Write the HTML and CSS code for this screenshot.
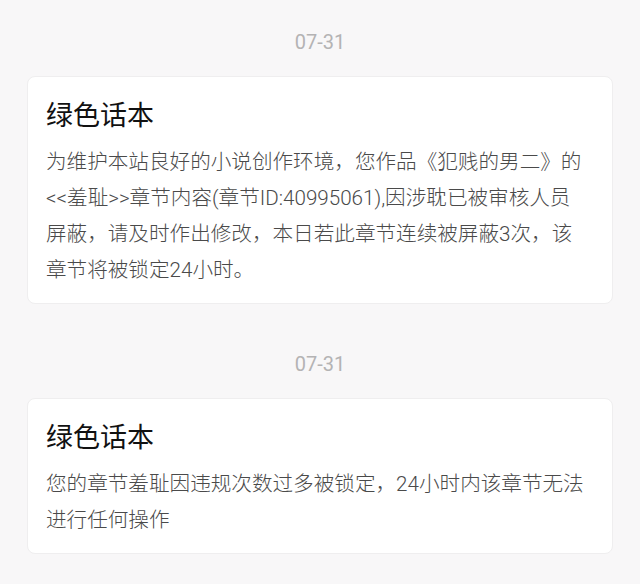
FILE: index.html
```html
<!DOCTYPE html>
<html lang="zh-CN">
<head>
<meta charset="utf-8">
<title>消息</title>
<link rel="stylesheet" href="styles.css">
</head>
<body>
<main class="feed">
  <section class="msg">
    <div class="msg-date">07-31</div>
    <article class="card">
      <h2 class="card-title">绿色话本</h2>
      <p class="card-text">为维护本站良好的小说创作环境，您作品《犯贱的男二》的&lt;&lt;羞耻&gt;&gt;章节内容(章节ID:40995061),因涉耽已被审核人员屏蔽，请及时作出修改，本日若此章节连续被屏蔽3次，该章节将被锁定24小时。</p>
    </article>
  </section>
  <section class="msg">
    <div class="msg-date">07-31</div>
    <article class="card">
      <h2 class="card-title">绿色话本</h2>
      <p class="card-text">您的章节羞耻因违规次数过多被锁定，24小时内该章节无法进行任何操作</p>
    </article>
  </section>
</main>
</body>
</html>
```

FILE: styles.css
```css
html, body {
  margin: 0;
  padding: 0;
  background: #f8f7f8;
}

body {
  font-family: Roboto, "Noto Sans CJK SC", sans-serif;
  width: 640px;
  height: 584px;
  overflow: hidden;
}

.feed {
  padding: 28px 27px 0 27px;
  display: flex;
  flex-direction: column;
  gap: 46px;
}

.msg {
  display: flex;
  flex-direction: column;
  gap: 20px;
}

.msg-date {
  text-align: center;
  font-family: Roboto, sans-serif;
  font-size: 20px;
  line-height: 28px;
  color: #b4b3b4;
}

.card {
  background: #ffffff;
  border: 1px solid #efeeef;
  border-radius: 8px;
  padding: 19px 23px 15px 18px;
}

.card-title {
  margin: 0 0 12px 0;
  font-family: "Noto Sans CJK SC", sans-serif;
  font-weight: normal;
  font-size: 27px;
  line-height: 36px;
  color: #111111;
}

.card-text {
  margin: 0;
  font-weight: 300;
  font-size: 20.6px;
  line-height: 36px;
  color: #4a4a4a;
}
```
